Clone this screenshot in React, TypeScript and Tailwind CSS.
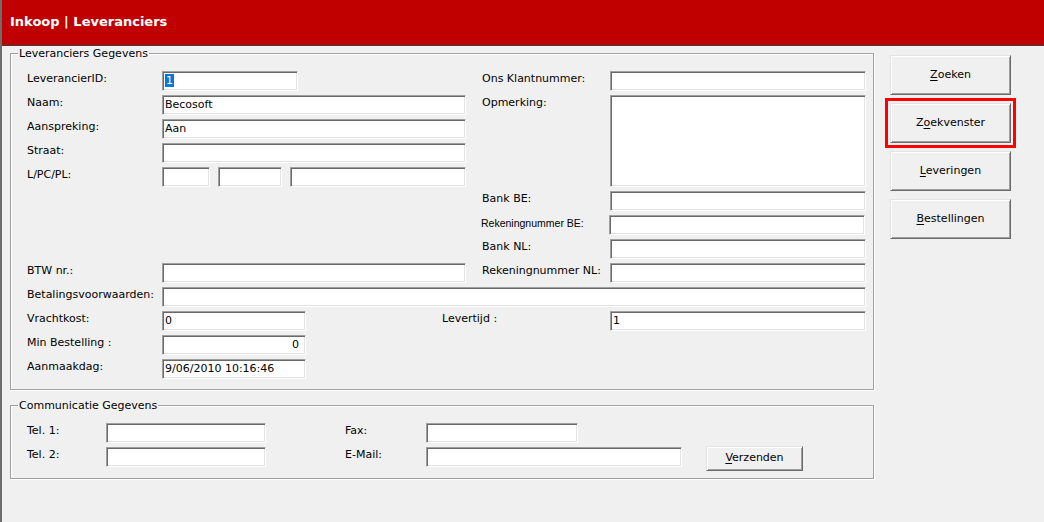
import type { ReactNode } from 'react';

const box =
  'h-5 bg-white border border-t-[#a0a0a0] border-l-[#a0a0a0] border-b-white border-r-white shadow-[inset_1px_1px_0_#696969,inset_-1px_-1px_0_#e3e3e3] px-[2px] leading-[18px] text-black overflow-hidden whitespace-nowrap';

const label = 'shrink-0 leading-[16px] text-black whitespace-nowrap';

function Field({ w, children, right }: { w: number; children?: ReactNode; right?: boolean }) {
  return (
    <div className={box + (right ? ' text-right pr-[6px]' : '')} style={{ width: w }}>
      {children}
    </div>
  );
}

function Row({ name, lw, children, small }: { name: string; lw: number; children?: ReactNode; small?: boolean }) {
  return (
    <div className="flex items-start h-5">
      <div
        className={label + (small ? " font-['Liberation_Sans',sans-serif] text-[10.5px] -ml-px" : '')}
        style={{ width: lw }}
      >
        {name}
      </div>
      {children}
    </div>
  );
}

function Button({ pre, key1, post, tall, ring }: { pre?: string; key1: string; post: string; tall?: boolean; ring?: boolean }) {
  return (
    <button
      className={
        'bg-[#f0f0f0] border border-t-[#e3e3e3] border-l-[#e3e3e3] border-b-[#696969] border-r-[#696969] shadow-[inset_1px_1px_0_#fff,inset_-1px_-1px_0_#a0a0a0] text-black text-[11px] ' +
        (tall ? 'h-10 w-[121px]' : 'h-[25px] w-[97px]') +
        (ring ? ' outline-[3px] outline-solid outline-[#ff0000] outline-offset-[2px]' : '')
      }
    >
      {pre}
      <span className="underline underline-offset-2">{key1}</span>
      {post}
    </button>
  );
}

function Group({ title, children, className }: { title: string; children: ReactNode; className?: string }) {
  return (
    <fieldset
      className={
        'w-[864px] border border-[#a0a0a0] shadow-[inset_1px_1px_0_#fff,1px_1px_0_#fff] ' + (className ?? '')
      }
    >
      <legend className="ml-[7px] px-px leading-[13px] text-black">{title}</legend>
      {children}
    </fieldset>
  );
}

export default function App() {
  return (
    <div className="w-[1044px] h-[522px] bg-[#f0f0f0] flex flex-col border-l-2 border-[#6d6d6d] font-['DejaVu_Sans',sans-serif] text-[11px] overflow-hidden">
      <div className="h-[46px] shrink-0 bg-[#c00000] border-b border-[#3c3c3c] pl-[8px] flex items-center">
        <span className="text-white font-bold text-[13px] leading-none -mt-[2px]">Inkoop | Leveranciers</span>
      </div>

      <div className="flex flex-1">
        <div className="pl-[8px] pt-px flex flex-col gap-[9px]">
          <Group title="Leveranciers Gegevens" className="pb-[10px]">
            <div className="pl-[16px] pt-[11px] flex flex-col gap-1">
              <div className="grid grid-cols-[439px_384px] gap-x-[16px] gap-y-1">
                <div className="flex flex-col gap-1">
                  <Row name="LeverancierID:" lw={135}>
                    <Field w={136}>
                      <span className="bg-[#0078d7] text-white px-px">1</span>
                    </Field>
                  </Row>
                  <Row name="Naam:" lw={135}>
                    <Field w={304}>Becosoft</Field>
                  </Row>
                  <Row name="Aanspreking:" lw={135}>
                    <Field w={304}>Aan</Field>
                  </Row>
                  <Row name="Straat:" lw={135}>
                    <Field w={304} />
                  </Row>
                  <Row name="L/PC/PL:" lw={135}>
                    <div className="flex gap-2">
                      <Field w={48} />
                      <Field w={64} />
                      <Field w={176} />
                    </div>
                  </Row>
                </div>
                <div className="flex flex-col gap-1">
                  <Row name="Ons Klantnummer:" lw={128}>
                    <Field w={256} />
                  </Row>
                  <div className="flex items-start h-[92px]">
                    <div className={label + ' w-[128px]'}>Opmerking:</div>
                    <div className={box + ' w-[256px] h-[92px]'} />
                  </div>
                  <Row name="Bank BE:" lw={128}>
                    <Field w={256} />
                  </Row>
                  <Row name="Rekeningnummer BE:" lw={128} small>
                    <Field w={256} />
                  </Row>
                  <Row name="Bank NL:" lw={128}>
                    <Field w={256} />
                  </Row>
                </div>
                <Row name="BTW nr.:" lw={135}>
                  <Field w={304} />
                </Row>
                <Row name="Rekeningnummer NL:" lw={128}>
                  <Field w={256} />
                </Row>
              </div>

              <Row name="Betalingsvoorwaarden:" lw={135}>
                <Field w={704} />
              </Row>
              <Row name="Vrachtkost:" lw={135}>
                <Field w={144}>0</Field>
                <div className={label + ' ml-[136px] w-[168px]'}>Levertijd :</div>
                <Field w={256}>1</Field>
              </Row>
              <Row name="Min Bestelling :" lw={135}>
                <Field w={144} right>
                  0
                </Field>
              </Row>
              <Row name="Aanmaakdag:" lw={135}>
                <Field w={144}>9/06/2010 10:16:46</Field>
              </Row>
            </div>
          </Group>

          <Group title="Communicatie Gegevens" className="pb-[7px]">
            <div className="pl-[16px] pt-[11px] flex flex-col gap-1">
              <div className="flex items-start h-5">
                <div className={label + ' w-[79px]'}>Tel. 1:</div>
                <Field w={160} />
                <div className={label + ' ml-[79px] w-[81px]'}>Fax:</div>
                <Field w={152} />
              </div>
              <div className="flex items-start">
                <div className={label + ' w-[79px]'}>Tel. 2:</div>
                <Field w={160} />
                <div className={label + ' ml-[79px] w-[81px]'}>E-Mail:</div>
                <Field w={256} />
                <div className="ml-[24px] -mt-px">
                  <Button key1="V" post="erzenden" />
                </div>
              </div>
            </div>
          </Group>
        </div>

        <div className="ml-[16px] pt-[9px] flex flex-col gap-2">
          <Button key1="Z" post="oeken" tall />
          <Button pre="Z" key1="o" post="ekvenster" tall ring />
          <Button key1="L" post="everingen" tall />
          <Button key1="B" post="estellingen" tall />
        </div>
      </div>
    </div>
  );
}
